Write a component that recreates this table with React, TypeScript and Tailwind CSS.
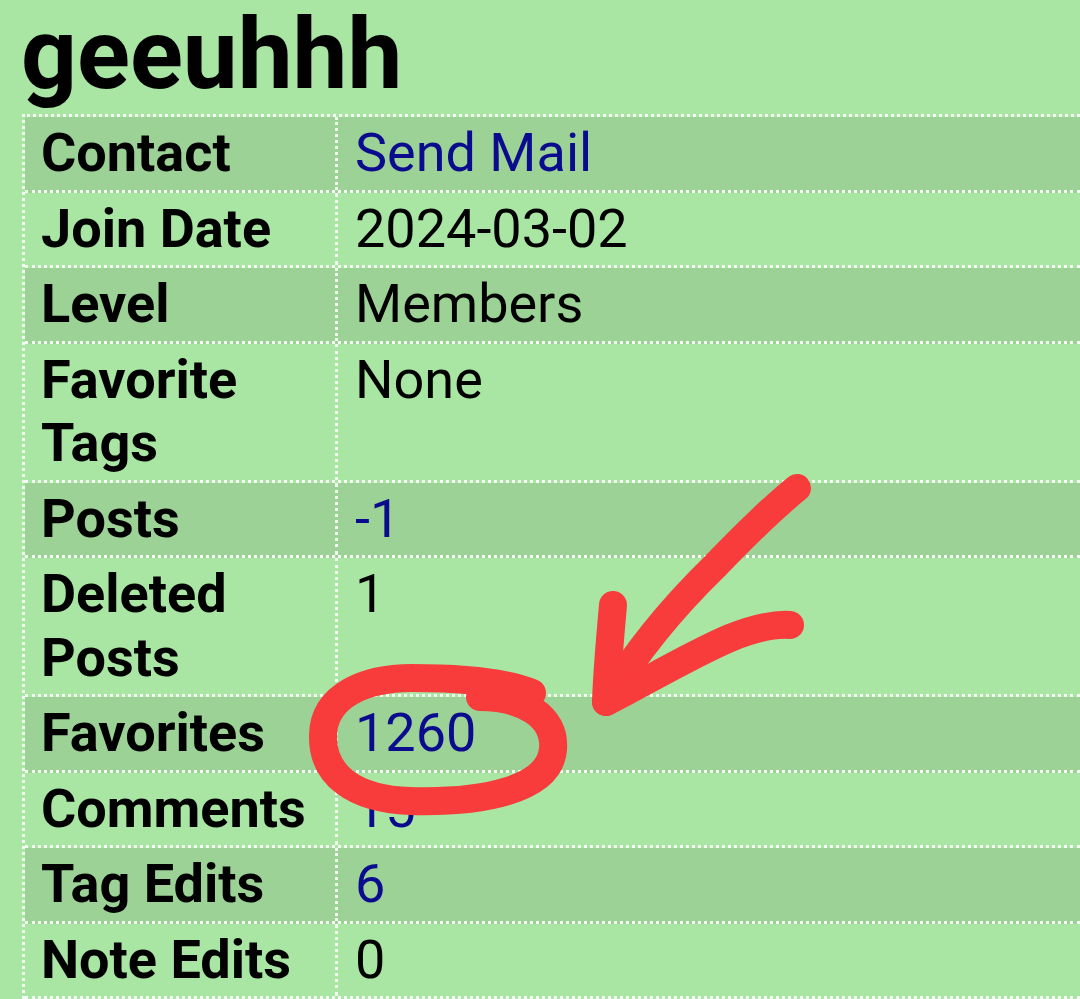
import React from "react";

type Row = { label: string; value: string; link?: boolean };

const rows: Row[] = [
  { label: "Contact", value: "Send Mail", link: true },
  { label: "Join Date", value: "2024-03-02" },
  { label: "Level", value: "Members" },
  { label: "Favorite Tags", value: "None" },
  { label: "Posts", value: "-1", link: true },
  { label: "Deleted Posts", value: "1" },
  { label: "Favorites", value: "1260", link: true },
  { label: "Comments", value: "15", link: true },
  { label: "Tag Edits", value: "6", link: true },
  { label: "Note Edits", value: "0" },
];

export default function App() {
  return (
    <div
      className="relative w-[1080px] h-[999px] overflow-hidden bg-[#a9e5a3] text-black"
      style={{ fontFamily: "Roboto, 'Noto Sans', sans-serif" }}
    >
      <h1 className="-mt-[3px] pl-[21px] text-[98px] font-bold leading-[116px]">geeuhhh</h1>
      <div className="ml-[22px] mt-[1px] border-t-[3px] border-l-[3px] border-dotted border-[#f4fbf2]">
        {rows.map((r, i) => (
          <div
            key={r.label}
            className={`flex border-b-[3px] border-dotted border-[#f4fbf2] ${
              i % 2 === 0 ? "bg-[#9dd297]" : "bg-[#a9e5a3]"
            }`}
          >
            <div className="w-[313px] shrink-0 border-r-[3px] border-dotted border-[#f4fbf2] pl-[16px] pr-[6px] pt-[4px] pb-[5px] text-[54px] font-bold leading-[63.5px]">
              {r.label}
            </div>
            <div
              className={`flex-1 pl-[17px] pt-[4px] pb-[5px] text-[54px] font-normal leading-[63.5px] ${
                r.link ? "text-[#0b0b8e]" : "text-black"
              }`}
            >
              {r.value}
            </div>
          </div>
        ))}
      </div>

      <svg
        className="pointer-events-none absolute left-0 top-0"
        width="1080"
        height="999"
        viewBox="0 0 1080 999"
        fill="none"
      >
        <g stroke="#f83b3b" strokeWidth="28" strokeLinecap="round" strokeLinejoin="round">
          <path d="M 480 697 C 522 697 556 716 553 749 C 550 790 482 803 410 801 C 355 799 322 776 323 735 C 324 695 366 678 412 678 C 462 678 505 682 532 693" />
          <path d="M 797 488 C 770 510 740 540 715 566 C 680 600 640 645 607 700" />
          <path d="M 613 605 C 610 640 607 670 606 702" />
          <path d="M 606 702 C 640 685 690 655 730 638 C 755 628 775 624 790 625" />
        </g>
      </svg>
    </div>
  );
}
